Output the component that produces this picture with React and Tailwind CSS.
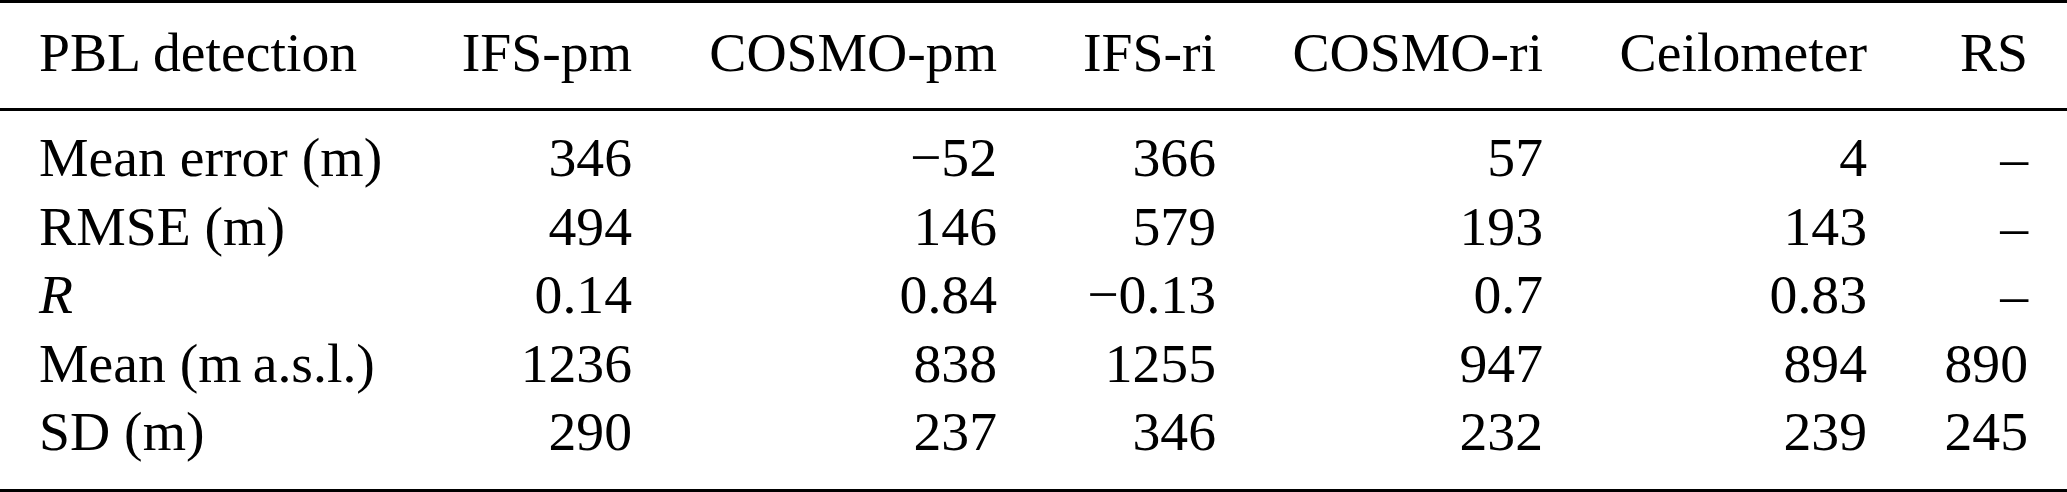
import React from 'react';

const headers = ['IFS-pm', 'COSMO-pm', 'IFS-ri', 'COSMO-ri', 'Ceilometer', 'RS'];

const rows = [
  { label: 'Mean error (m)', values: ['346', '\u221252', '366', '57', '4', '\u2013'] },
  { label: 'RMSE (m)', values: ['494', '146', '579', '193', '143', '\u2013'] },
  { label: <i>R</i>, values: ['0.14', '0.84', '\u22120.13', '0.7', '0.83', '\u2013'] },
  { label: 'Mean (m\u2009a.s.l.)', values: ['1236', '838', '1255', '947', '894', '890'] },
  { label: 'SD (m)', values: ['290', '237', '346', '232', '239', '245'] },
];

const grid = 'grid grid-cols-[450px_182px_365px_219px_327px_324px_200px]';

const Row = ({ label, values }) => (
  <div className={grid}>
    <div className="pl-[39px] whitespace-nowrap">{label}</div>
    {values.map((v, i) => (
      <div key={i} className={`text-right whitespace-nowrap ${i === values.length - 1 ? 'pr-[39px]' : ''}`}>
        {v}
      </div>
    ))}
  </div>
);

const App = () => {
  return (
    <div
      className="w-[2067px] h-[492px] bg-white text-black text-[55.7px] leading-[68.6px]"
      style={{ fontFamily: '"Liberation Serif", "Times New Roman", serif' }}
    >
      <div className="border-t-[3px] border-b-[3px] border-black">
        <div className="pt-[15px] pb-[21px] border-b-[3px] border-black">
          <Row label="PBL detection" values={headers} />
        </div>
        <div className="pt-[12.5px] pb-[23px]">
          {rows.map((r, i) => (
            <Row key={i} label={r.label} values={r.values} />
          ))}
        </div>
      </div>
    </div>
  );
};

export default App;
